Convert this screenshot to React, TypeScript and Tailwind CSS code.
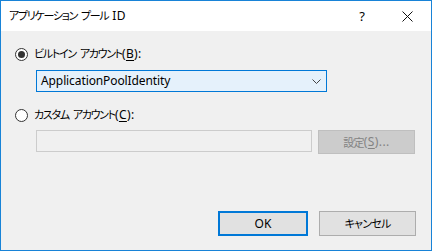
import React from "react";

const jp = {
  fontFamily: '"Noto Sans CJK JP", "Noto Sans", sans-serif',
};

function Sp() {
  return <span className="inline-block w-[4px]" />;
}

function K({ children }: { children: React.ReactNode }) {
  return <span className="tracking-[-1.3px]">{children}</span>;
}

function L({ children }: { children: React.ReactNode }) {
  return <span className="font-['Noto_Sans',sans-serif] tracking-[0.4px] text-[12px]">{children}</span>;
}

function Radio({ checked }: { checked?: boolean }) {
  return (
    <span className="w-[13px] h-[13px] rounded-full border border-[#333333] bg-white flex items-center justify-center shrink-0">
      {checked && <span className="w-[7px] h-[7px] rounded-full bg-[#333333]" />}
    </span>
  );
}

export default function App() {
  return (
    <div
      className="w-[432px] h-[251px] border border-[#1883d7] flex flex-col text-[11px] text-black leading-none [font-feature-settings:'palt'_1]"
      style={jp}
    >
      <div className="h-[30px] bg-white flex items-center pl-[8px] shrink-0">
        <span>
          <K>アプリケーション</K>
          <Sp />
          <K>プール</K>
          <Sp />
          <L>ID</L>
        </span>
        <span className="ml-auto mr-[37px] text-[13px] font-['Noto_Sans',sans-serif]">?</span>
        <svg width="11" height="11" viewBox="0 0 11 11" className="mr-[18px]">
          <path d="M0.5 0.5 L10.5 10.5 M10.5 0.5 L0.5 10.5" stroke="#111" strokeWidth="1" />
        </svg>
      </div>
      <div className="flex-1 bg-[#f0f0f0] flex flex-col pl-[14px] pr-[15px] pb-[14px]">
        <div className="mt-[15px] h-[16px] flex items-center">
          <Radio checked />
          <span className="ml-[6px]">
            <K>ビルトイン</K>
            <Sp />
            <K>アカウント</K>
            <L>
              (<span className="underline underline-offset-2">B</span>):
            </L>
          </span>
        </div>
        <div className="mt-[8px] ml-[21px] w-[291px] h-[22px] border border-[#0078d7] bg-[#e5f1fb] flex items-center pl-[4px] pr-[5px]">
          <span className="font-['Noto_Sans',sans-serif] text-[12px] tracking-[-0.1px]">ApplicationPoolIdentity</span>
          <svg width="9" height="5" viewBox="0 0 9 5" className="ml-auto mr-[0px]">
            <path d="M0.5 0.5 L4.5 4.5 L8.5 0.5" stroke="#444" strokeWidth="1" fill="none" />
          </svg>
        </div>
        <div className="mt-[15px] h-[16px] flex items-center">
          <Radio />
          <span className="ml-[6px]">
            <K>カスタム</K>
            <Sp />
            <K>アカウント</K>
            <L>
              (<span className="underline underline-offset-2">C</span>):
            </L>
          </span>
        </div>
        <div className="mt-[7px] ml-[21px] flex items-start">
          <div className="w-[276px] h-[22px] border border-[#cccccc] bg-[#f0f0f0]" />
          <div className="ml-[6px] w-[97px] h-[24px] border border-[#bfbfbf] bg-[#cccccc] text-[#838383] flex items-center justify-center">
            <span className="tracking-[-0.8px]">設定</span>
            <L>
              (<span className="underline underline-offset-2">S</span>)...
            </L>
          </div>
        </div>
        <div className="mt-auto flex justify-end">
          <div className="w-[90px] h-[25px] border-2 border-[#0078d7] bg-[#e1e1e1] flex items-center justify-center font-['Noto_Sans',sans-serif] text-[12px]">
            OK
          </div>
          <div className="ml-[11px] w-[97px] h-[25px] border border-[#adadad] bg-[#e1e1e1] flex items-center justify-center tracking-[-0.8px]">
            キャンセル
          </div>
        </div>
      </div>
    </div>
  );
}
